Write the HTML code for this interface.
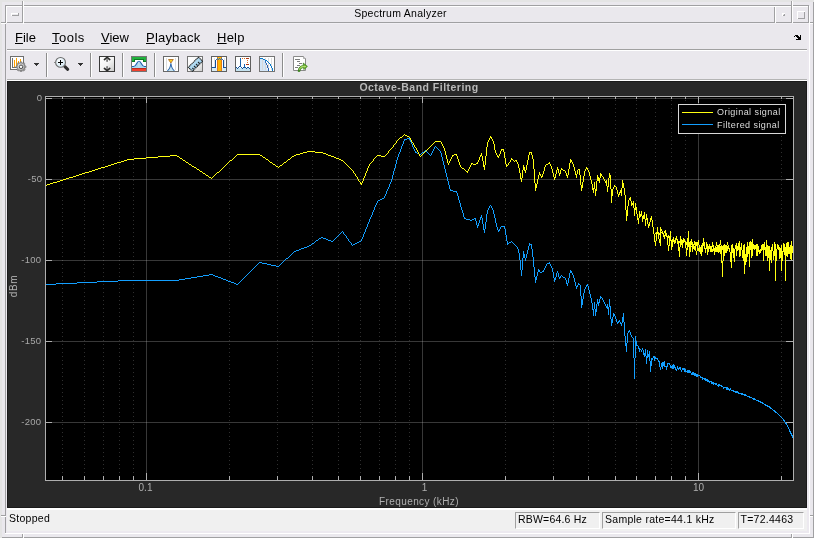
<!DOCTYPE html>
<html><head><meta charset="utf-8"><title>Spectrum Analyzer</title>
<style>
html,body{margin:0;padding:0}
body{width:814px;height:538px;overflow:hidden;background:#eae8ed;position:relative;font-family:"Liberation Sans",sans-serif;color:#000}
.l{position:absolute}
.title{will-change:transform;position:absolute;left:24px;top:6px;width:750px;height:15px;line-height:15px;text-align:center;font-size:10.5px;letter-spacing:0.27px;padding-left:3px;box-sizing:border-box}
.mi{will-change:transform;position:absolute;top:30px;height:16px;line-height:16px;font-size:13px;white-space:nowrap}
.ic{position:absolute;display:block}
.fig{position:absolute;left:7px;top:81px;width:800px;height:427px;background:#282828;overflow:hidden;box-shadow:inset 0 0 0 1px #1b1b1b}
.yl,.xl,.ttl,.xlab,.ylab,.lg{will-change:transform}
.plot{position:absolute;left:0;top:0}
.yl{position:absolute;left:0;width:34.4px;text-align:right;font-size:9.5px;line-height:12px;height:12px;color:#a8a8a8;letter-spacing:0.3px}
.xl{position:absolute;top:401px;width:41px;text-align:center;font-size:10px;line-height:12px;color:#afafaf}
.ttl{position:absolute;left:0;top:0;width:824px;text-align:center;font-size:10.5px;font-weight:bold;line-height:12px;color:#b9b9b9;letter-spacing:0.48px}
.xlab{position:absolute;left:312px;top:415px;width:200px;text-align:center;font-size:10px;line-height:12px;color:#afafaf;letter-spacing:0.4px}
.ylab{position:absolute;left:-13px;top:199px;width:40px;height:12px;text-align:center;font-size:10px;line-height:12px;color:#afafaf;transform:rotate(-90deg);transform-origin:center center;letter-spacing:0.6px}
.lg{position:absolute;left:710px;font-size:9px;line-height:12px;color:#dcdcdc;white-space:nowrap;letter-spacing:0.44px;margin-top:0.3px}
.sb{position:absolute;left:7px;top:508px;width:800px;height:23px;background:#f0f0f0;box-sizing:border-box}
.sb .hl{position:absolute;left:0;top:0;width:800px;height:2px;background:#fff}
.st{position:absolute;top:3px;height:14px;line-height:14px;font-size:10.5px;letter-spacing:0.27px;white-space:nowrap;will-change:transform}
.bx{position:absolute;top:4px;height:17px;will-change:transform;box-sizing:border-box;border:1px solid;border-color:#a0a0a0 #fff #fff #a0a0a0;font-size:10.5px;line-height:12px;padding-left:3px;white-space:nowrap;letter-spacing:0.27px}
</style></head><body>
<div class="l" style="left:0px;top:0px;width:814px;height:2px;background:#e4e4e4"></div>
<div class="l" style="left:0px;top:0px;width:2px;height:538px;background:#e4e4e4"></div>
<div class="l" style="left:813px;top:2px;width:1px;height:536px;background:#a0a0a2"></div>
<div class="l" style="left:2px;top:537px;width:812px;height:1px;background:#a0a0a2"></div>
<div class="l" style="left:5px;top:5px;width:804px;height:1px;background:#a0a0a2"></div>
<div class="l" style="left:5px;top:5px;width:1px;height:528px;background:#a0a0a2"></div>
<div class="l" style="left:809px;top:6px;width:1px;height:528px;background:#ffffff"></div>
<div class="l" style="left:5px;top:533px;width:805px;height:1px;background:#ffffff"></div>
<div class="l" style="left:6px;top:531px;width:803px;height:2px;background:#ece9ef"></div>
<div class="l" style="left:6px;top:6px;width:802px;height:1px;background:#ffffff"></div>
<div class="l" style="left:6px;top:6px;width:1px;height:17px;background:#ffffff"></div>
<div class="l" style="left:6px;top:24px;width:1px;height:507px;background:#ece9ef"></div>
<div class="l" style="left:7px;top:23px;width:802px;height:1px;background:#f1eff4"></div>
<div class="l" style="left:807px;top:24px;width:2px;height:507px;background:#ece9ef"></div>
<div class="l" style="left:7px;top:22px;width:802px;height:1px;background:#a0a0a2"></div>
<div class="l" style="left:808px;top:5px;width:1px;height:18px;background:#a0a0a2"></div>
<div class="l" style="left:22px;top:1px;width:1px;height:22px;background:#a0a0a2"></div>
<div class="l" style="left:23px;top:1px;width:1px;height:23px;background:#ffffff"></div>
<div class="l" style="left:1px;top:22px;width:5px;height:1px;background:#a0a0a2"></div>
<div class="l" style="left:1px;top:23px;width:5px;height:1px;background:#ffffff"></div>
<div class="l" style="left:791px;top:1px;width:1px;height:22px;background:#a0a0a2"></div>
<div class="l" style="left:792px;top:1px;width:1px;height:22px;background:#ffffff"></div>
<div class="l" style="left:810px;top:22px;width:3px;height:1px;background:#a0a0a2"></div>
<div class="l" style="left:810px;top:23px;width:3px;height:1px;background:#ffffff"></div>
<div class="l" style="left:1px;top:515px;width:5px;height:1px;background:#a0a0a2"></div>
<div class="l" style="left:1px;top:516px;width:5px;height:1px;background:#ffffff"></div>
<div class="l" style="left:810px;top:515px;width:3px;height:1px;background:#a0a0a2"></div>
<div class="l" style="left:810px;top:516px;width:3px;height:1px;background:#ffffff"></div>
<div class="l" style="left:22px;top:534px;width:1px;height:4px;background:#a0a0a2"></div>
<div class="l" style="left:23px;top:534px;width:1px;height:4px;background:#ffffff"></div>
<div class="l" style="left:791px;top:534px;width:1px;height:4px;background:#a0a0a2"></div>
<div class="l" style="left:792px;top:534px;width:1px;height:4px;background:#ffffff"></div>
<div class="l" style="left:774px;top:7px;width:1px;height:15px;background:#a0a0a2"></div>
<div class="l" style="left:775px;top:7px;width:1px;height:16px;background:#ffffff"></div>
<div class="l" style="left:11px;top:13px;width:8px;height:1px;background:#ffffff"></div>
<div class="l" style="left:11px;top:13px;width:1px;height:3px;background:#ffffff"></div>
<div class="l" style="left:12px;top:15px;width:7px;height:1px;background:#a0a0a2"></div>
<div class="l" style="left:18px;top:13px;width:1px;height:3px;background:#a0a0a2"></div>
<div class="l" style="left:782px;top:13px;width:3px;height:1px;background:#ffffff"></div>
<div class="l" style="left:782px;top:13px;width:1px;height:3px;background:#ffffff"></div>
<div class="l" style="left:783px;top:15px;width:2px;height:1px;background:#a0a0a2"></div>
<div class="l" style="left:784px;top:14px;width:1px;height:2px;background:#a0a0a2"></div>
<div class="l" style="left:797px;top:11px;width:8px;height:1px;background:#ffffff"></div>
<div class="l" style="left:797px;top:11px;width:1px;height:8px;background:#ffffff"></div>
<div class="l" style="left:798px;top:18px;width:7px;height:1px;background:#a0a0a2"></div>
<div class="l" style="left:804px;top:12px;width:1px;height:7px;background:#a0a0a2"></div>
<div class="l" style="left:7px;top:49px;width:800px;height:1px;background:#a0a0a0"></div>
<div class="l" style="left:7px;top:50px;width:800px;height:1px;background:#ffffff"></div>
<div class="l" style="left:7px;top:79px;width:800px;height:1px;background:#b4b4b4"></div>
<div class="l" style="left:7px;top:80px;width:800px;height:1px;background:#ffffff"></div>
<div class="l" style="left:46px;top:53px;width:1px;height:24px;background:#8c8c8c"></div>
<div class="l" style="left:47px;top:53px;width:1px;height:24px;background:#ffffff"></div>
<div class="l" style="left:90px;top:53px;width:1px;height:24px;background:#8c8c8c"></div>
<div class="l" style="left:91px;top:53px;width:1px;height:24px;background:#ffffff"></div>
<div class="l" style="left:122px;top:53px;width:1px;height:24px;background:#8c8c8c"></div>
<div class="l" style="left:123px;top:53px;width:1px;height:24px;background:#ffffff"></div>
<div class="l" style="left:154px;top:53px;width:1px;height:24px;background:#8c8c8c"></div>
<div class="l" style="left:155px;top:53px;width:1px;height:24px;background:#ffffff"></div>
<div class="l" style="left:282px;top:53px;width:1px;height:24px;background:#8c8c8c"></div>
<div class="l" style="left:283px;top:53px;width:1px;height:24px;background:#ffffff"></div>
<div class="title">Spectrum Analyzer</div>
<div class="mi" style="left:15px;letter-spacing:0.00px"><u>F</u>ile</div>
<div class="mi" style="left:52px;letter-spacing:0.50px"><u>T</u>ools</div>
<div class="mi" style="left:101px;letter-spacing:0.00px"><u>V</u>iew</div>
<div class="mi" style="left:146px;letter-spacing:0.20px"><u>P</u>layback</div>
<div class="mi" style="left:217px;letter-spacing:0.25px"><u>H</u>elp</div>

<svg class="ic" style="left:794px;top:35px" width="7" height="5" viewBox="0 0 7 5" shape-rendering="crispEdges"><path fill="#000" d="M1 0h3v1h-3zM6 0h1v1h-1zM0 1h1v1h-1zM2 1h3v1h-3zM6 1h1v1h-1zM3 2h4v1h-4zM4 3h3v1h-3zM2 4h5v1h-5z"/></svg>
<svg class="ic" style="left:10px;top:56px" width="18" height="16" viewBox="0 0 18 16"><defs><linearGradient id="gg" x1="0" y1="0" x2="1" y2="1"><stop offset="0" stop-color="#efefef"/><stop offset="1" stop-color="#9c9c9c"/></linearGradient></defs>
<g shape-rendering="crispEdges"><rect x="0.5" y="0.5" width="13" height="13" fill="#fff" stroke="#6e6e6e"/>
<rect x="2" y="2" width="1" height="10" fill="#707070"/><rect x="2" y="11" width="5" height="1" fill="#707070"/>
<rect x="4" y="4" width="1" height="7" fill="#ffa200"/><rect x="6" y="2" width="1" height="9" fill="#ffa200"/><rect x="8" y="5" width="1" height="4" fill="#ffa200"/><rect x="10" y="3" width="1" height="4" fill="#ffa200"/></g>
<g transform="translate(11,10.8)">
<g fill="#b4b4b4" stroke="#606060" stroke-width="0.55"><rect x="-1.05" y="-5" width="2.1" height="2" rx="0.5" transform="rotate(0)"/><rect x="-1.05" y="-5" width="2.1" height="2" rx="0.5" transform="rotate(45)"/><rect x="-1.05" y="-5" width="2.1" height="2" rx="0.5" transform="rotate(90)"/><rect x="-1.05" y="-5" width="2.1" height="2" rx="0.5" transform="rotate(135)"/><rect x="-1.05" y="-5" width="2.1" height="2" rx="0.5" transform="rotate(180)"/><rect x="-1.05" y="-5" width="2.1" height="2" rx="0.5" transform="rotate(225)"/><rect x="-1.05" y="-5" width="2.1" height="2" rx="0.5" transform="rotate(270)"/><rect x="-1.05" y="-5" width="2.1" height="2" rx="0.5" transform="rotate(315)"/></g>
<circle r="3.9" fill="url(#gg)" stroke="#6a6a6a" stroke-width="0.6"/>
<circle r="1.75" fill="#fafafa" stroke="#4a4a4a" stroke-width="0.95"/></g></svg>
<svg class="ic" style="left:54px;top:56px" width="18" height="16" viewBox="0 0 18 16"><defs><radialGradient id="zg" cx="0.4" cy="0.35" r="0.7"><stop offset="0" stop-color="#ffffff"/><stop offset="1" stop-color="#cfe6f2"/></radialGradient></defs>
<path d="M10.9 10.7 L13.7 13.3" stroke="#2e2e2e" stroke-width="3.1" stroke-linecap="round"/>
<circle cx="6.55" cy="6.4" r="4.9" fill="url(#zg)" stroke="#6c6c6c" stroke-width="1.1"/>
<g shape-rendering="crispEdges" fill="#000"><rect x="4" y="6" width="5" height="1"/><rect x="6" y="4" width="1" height="5"/><rect x="0" y="6" width="1.4" height="1" fill="#8a8a8a"/></g></svg>
<svg class="ic" style="left:99px;top:56px" width="16" height="16" viewBox="0 0 16 16"><defs><linearGradient id="ag" x1="0" y1="0" x2="1" y2="1"><stop offset="0" stop-color="#ffffff"/><stop offset="0.5" stop-color="#f4f4f4"/><stop offset="1" stop-color="#c8c8c8"/></linearGradient></defs>
<rect x="0.5" y="0.5" width="15" height="15" fill="url(#ag)" stroke="#3a3a3a" shape-rendering="crispEdges"/>
<rect x="7.2" y="3.2" width="1.8" height="2.6" fill="#7a7a7a"/><rect x="7.2" y="10.2" width="1.8" height="2.6" fill="#7a7a7a"/>
<path d="M5.4 3.6 L8.1 1.3 L10.8 3.6" fill="none" stroke="#2c2c2c" stroke-width="1.6" stroke-linecap="round" stroke-linejoin="miter"/>
<path d="M5.4 12.4 L8.1 14.7 L10.8 12.4" fill="none" stroke="#2c2c2c" stroke-width="1.6" stroke-linecap="round" stroke-linejoin="miter"/></svg>
<svg class="ic" style="left:131px;top:56px" width="16" height="16" viewBox="0 0 16 16"><g shape-rendering="crispEdges"><rect x="0.5" y="0.5" width="15" height="15" fill="#fff" stroke="#747474"/>
<rect x="1" y="1" width="14" height="2" fill="#22b13e"/><rect x="1" y="3" width="3" height="2" fill="#22b13e"/><rect x="12" y="3" width="3" height="2" fill="#22b13e"/>
<rect x="3" y="3" width="10" height="1" fill="#0d7a22"/><rect x="1" y="5" width="3" height="1" fill="#0d7a22"/><rect x="12" y="5" width="3" height="1" fill="#0d7a22"/><rect x="3" y="4" width="1" height="1" fill="#0d7a22"/><rect x="12" y="4" width="1" height="1" fill="#0d7a22"/>
<rect x="1" y="11" width="14" height="1" fill="#a8dcf2"/><rect x="1" y="12" width="14" height="1" fill="#c0281a"/><rect x="1" y="13" width="14" height="2" fill="#f0402e"/></g>
<path d="M1 10.5 L2.5 10.5 C5.6 10.5 5.4 5.2 8 5.2 C10.6 5.2 10.4 10.5 13.5 10.5 L15 10.5 L15 11 L1 11 Z" fill="#a9d4ec"/>
<path d="M1 10.5 L2.5 10.5 C5.6 10.5 5.4 5.2 8 5.2 C10.6 5.2 10.4 10.5 13.5 10.5 L15 10.5" fill="none" stroke="#1f5fae" stroke-width="1.1"/>
<rect x="7.6" y="5.6" width="0.7" height="5.4" fill="#d4eaf6"/></svg>
<svg class="ic" style="left:163px;top:56px" width="16" height="16" viewBox="0 0 16 16"><g shape-rendering="crispEdges"><rect x="0.5" y="0.5" width="15" height="15" fill="#fff" stroke="#686868"/>
<rect x="3" y="2" width="1" height="12" fill="#dcdcdc"/><rect x="12" y="2" width="1" height="12" fill="#dcdcdc"/></g>
<path d="M4.4 15 C6.8 13 7.4 11.5 7.9 7.5 C8.4 11.5 9 13 11.4 15 Z" fill="#c4e4f2"/>
<path d="M4.4 14.8 C6.8 13 7.4 11.5 7.9 7.2 C8.4 11.5 9 13 11.4 14.8" fill="none" stroke="#2a66ac" stroke-width="1.05"/>
<path d="M5.5 3.5 L10.3 3.5 L7.9 7 Z" fill="#ffd21e" stroke="#b0702a" stroke-width="0.9" stroke-linejoin="round"/></svg>
<svg class="ic" style="left:187px;top:56px" width="16" height="16" viewBox="0 0 16 16"><defs><linearGradient id="rg" x1="0" y1="0" x2="1" y2="1"><stop offset="0" stop-color="#ffffff"/><stop offset="0.55" stop-color="#f6f6f6"/><stop offset="1" stop-color="#cdcdcd"/></linearGradient>
<linearGradient id="rb" x1="0" y1="0" x2="1" y2="1"><stop offset="0" stop-color="#d4eefa"/><stop offset="1" stop-color="#86c4ea"/></linearGradient></defs>
<rect x="0.5" y="0.5" width="15" height="15" fill="url(#rg)" stroke="#747474" shape-rendering="crispEdges"/>
<path d="M11.4 1.2 L15.6 5.2 L5.5 15.3 L1.3 11.3 Z" fill="url(#rb)" stroke="#222" stroke-width="1.1" stroke-dasharray="1.3 0.5"/>
<g stroke="#222" stroke-width="1.1"><path d="M11.0 6.0 L12.7 7.7"/><path d="M9.0 8.0 L10.7 9.7"/><path d="M7.0 10.0 L8.7 11.7"/><path d="M5.4 12.0 L6.7 13.3"/></g></svg>
<svg class="ic" style="left:211px;top:56px" width="16" height="16" viewBox="0 0 16 16"><g shape-rendering="crispEdges"><rect x="0.5" y="0.5" width="15" height="15" fill="#fff" stroke="#606060"/>
<rect x="3" y="2" width="1" height="12" fill="#e2e2e2"/><rect x="13" y="2" width="1" height="12" fill="#e2e2e2"/>
<rect x="1" y="12" width="14" height="3" fill="#d9ecf4"/>
<rect x="6" y="1" width="5" height="14" fill="#ffb400"/><rect x="6" y="1" width="1" height="14" fill="#e07a18"/><rect x="10" y="1" width="1" height="14" fill="#e07a18"/>
<rect x="1" y="11" width="3" height="1" fill="#14509c"/><rect x="4" y="4" width="1" height="8" fill="#14509c"/><rect x="5" y="3" width="1" height="1" fill="#1f6fc0"/>
<rect x="12" y="11" width="3" height="1" fill="#14509c"/><rect x="12" y="4" width="1" height="8" fill="#14509c"/><rect x="11" y="3" width="1" height="1" fill="#1f6fc0"/>
<rect x="6" y="2" width="1" height="1" fill="#1f6fc0"/><rect x="7" y="3" width="1" height="1" fill="#1f6fc0"/><rect x="8" y="2" width="1" height="1" fill="#1f6fc0"/><rect x="9" y="3" width="1" height="1" fill="#1f6fc0"/><rect x="10" y="2" width="1" height="1" fill="#1f6fc0"/>
</g></svg>
<svg class="ic" style="left:235px;top:56px" width="16" height="16" viewBox="0 0 16 16"><g shape-rendering="crispEdges"><rect x="0.5" y="0.5" width="15" height="15" fill="#fff" stroke="#606060"/>
<rect x="1" y="12" width="14" height="3" fill="#c4e2ef"/>
<rect x="5" y="2" width="1" height="9" fill="#1a62ae"/><rect x="9" y="8" width="1" height="4" fill="#1a62ae"/>
<rect x="1" y="11" width="1" height="1" fill="#15509a"/><rect x="2" y="12" width="1" height="1" fill="#15509a"/><rect x="3" y="11" width="1" height="1" fill="#15509a"/><rect x="4" y="10" width="1" height="1" fill="#15509a"/>
<rect x="6" y="11" width="1" height="1" fill="#15509a"/><rect x="7" y="12" width="1" height="1" fill="#15509a"/><rect x="8" y="11" width="1" height="1" fill="#15509a"/><rect x="10" y="11" width="1" height="1" fill="#15509a"/><rect x="11" y="12" width="1" height="1" fill="#15509a"/><rect x="12" y="11" width="2" height="1" fill="#15509a"/><rect x="14" y="12" width="1" height="1" fill="#15509a"/>
<rect x="7" y="2" width="1" height="1" fill="#e0701e"/><rect x="9" y="2" width="1" height="1" fill="#e0701e"/><rect x="11" y="2" width="3" height="1" fill="#b0340f"/>
<rect x="12" y="4" width="1" height="1" fill="#e0701e"/><rect x="12" y="6" width="1" height="1" fill="#e0701e"/><rect x="11" y="8" width="3" height="1" fill="#b0340f"/>
</g></svg>
<svg class="ic" style="left:259px;top:56px" width="16" height="16" viewBox="0 0 16 16"><g shape-rendering="crispEdges"><rect x="0.5" y="0.5" width="15" height="15" fill="#fff" stroke="#747474"/></g>
<path d="M1 2.5 L3.5 2.5 L6 4.5 L9 15 L1 15 Z" fill="#d4e6f8"/>
<g shape-rendering="crispEdges"><rect x="3" y="2" width="1" height="12" fill="#d8d8d8"/><rect x="6" y="2" width="1" height="12" fill="#d8d8d8"/><rect x="9" y="2" width="1" height="12" fill="#dcdcdc"/><rect x="12" y="2" width="1" height="12" fill="#dcdcdc"/>
<rect x="1" y="2" width="3" height="1" fill="#0a7acc"/><rect x="4" y="3" width="2" height="1" fill="#0a7acc"/><rect x="6" y="4" width="2" height="1" fill="#0a7acc"/><rect x="8" y="5" width="1" height="1" fill="#0a7acc"/><rect x="9" y="6" width="1" height="1" fill="#0a7acc"/><rect x="10" y="7" width="1" height="1" fill="#0a7acc"/><rect x="11" y="8" width="1" height="2" fill="#0a7acc"/><rect x="12" y="10" width="1" height="2" fill="#0a7acc"/><rect x="13" y="12" width="1" height="3" fill="#0a7acc"/>
<rect x="6" y="5" width="1" height="2" fill="#2f6ab8"/><rect x="7" y="7" width="1" height="2" fill="#2f6ab8"/><rect x="8" y="9" width="1" height="3" fill="#3a62a8"/><rect x="9" y="12" width="1" height="3" fill="#2060b8"/>
</g></svg>
<svg class="ic" style="left:292px;top:56px" width="18" height="16" viewBox="0 0 18 16"><defs><linearGradient id="gr" x1="0" y1="1" x2="1" y2="0"><stop offset="0" stop-color="#2f7d12"/><stop offset="0.5" stop-color="#8cc83c"/><stop offset="1" stop-color="#4c9a1c"/></linearGradient></defs>
<path d="M1.5 0.5 L11.5 0.5 L13.5 2.5 L13.5 14.5 L1.5 14.5 Z" fill="#fff" stroke="#8a8a8a"/>
<path d="M11.5 0.5 L11.5 2.5 L13.5 2.5" fill="#f4f4f4" stroke="#9a9a9a" stroke-width="0.8"/>
<g shape-rendering="crispEdges" fill="#7c7c7c"><rect x="3" y="3" width="5" height="1"/><rect x="5" y="5" width="3" height="1"/><rect x="7" y="7" width="3" height="1"/><rect x="5" y="9" width="3" height="1"/><rect x="3" y="11" width="3" height="1"/></g>
<path d="M6.2 15.6 C6.2 11.6 8.2 9.6 11.4 9.5 L11.2 7 L15.4 10.4 L11.8 13.6 L11.6 11.6 C9.6 11.8 8.2 13 7.8 15.6 Z" fill="url(#gr)" stroke="#2e7a14" stroke-width="0.7" stroke-linejoin="round"/>
<path d="M7.4 13.4 C8 11.4 9.6 10.5 11.8 10.4 L13.6 10.5" fill="none" stroke="#c6ea8a" stroke-width="0.8" stroke-linecap="round"/></svg>
<svg class="ic" style="left:34px;top:63px" width="5" height="3" viewBox="0 0 5 3" shape-rendering="crispEdges"><rect x="0" y="0" width="5" height="1" fill="#333"/><rect x="1" y="1" width="3" height="1" fill="#333"/><rect x="2" y="2" width="1" height="1" fill="#333"/></svg>
<svg class="ic" style="left:78px;top:63px" width="5" height="3" viewBox="0 0 5 3" shape-rendering="crispEdges"><rect x="0" y="0" width="5" height="1" fill="#333"/><rect x="1" y="1" width="3" height="1" fill="#333"/><rect x="2" y="2" width="1" height="1" fill="#333"/></svg>

<div class="fig">
<svg class="plot" width="800" height="427" viewBox="0 0 800 427"><rect x="38" y="15" width="749" height="385" fill="#000"/>
<g shape-rendering="crispEdges"><line x1="55.5" y1="19" x2="55.5" y2="398" stroke="rgba(175,175,175,0.27)" stroke-dasharray="1 3"/><line x1="77.5" y1="19" x2="77.5" y2="398" stroke="rgba(175,175,175,0.27)" stroke-dasharray="1 3"/><line x1="96.5" y1="19" x2="96.5" y2="398" stroke="rgba(175,175,175,0.27)" stroke-dasharray="1 3"/><line x1="112.5" y1="19" x2="112.5" y2="398" stroke="rgba(175,175,175,0.27)" stroke-dasharray="1 3"/><line x1="126.5" y1="19" x2="126.5" y2="398" stroke="rgba(175,175,175,0.27)" stroke-dasharray="1 3"/><line x1="222.5" y1="19" x2="222.5" y2="398" stroke="rgba(175,175,175,0.27)" stroke-dasharray="1 3"/><line x1="270.5" y1="19" x2="270.5" y2="398" stroke="rgba(175,175,175,0.27)" stroke-dasharray="1 3"/><line x1="305.5" y1="19" x2="305.5" y2="398" stroke="rgba(175,175,175,0.27)" stroke-dasharray="1 3"/><line x1="331.5" y1="19" x2="331.5" y2="398" stroke="rgba(175,175,175,0.27)" stroke-dasharray="1 3"/><line x1="353.5" y1="19" x2="353.5" y2="398" stroke="rgba(175,175,175,0.27)" stroke-dasharray="1 3"/><line x1="372.5" y1="19" x2="372.5" y2="398" stroke="rgba(175,175,175,0.27)" stroke-dasharray="1 3"/><line x1="388.5" y1="19" x2="388.5" y2="398" stroke="rgba(175,175,175,0.27)" stroke-dasharray="1 3"/><line x1="402.5" y1="19" x2="402.5" y2="398" stroke="rgba(175,175,175,0.27)" stroke-dasharray="1 3"/><line x1="498.5" y1="19" x2="498.5" y2="398" stroke="rgba(175,175,175,0.27)" stroke-dasharray="1 3"/><line x1="546.5" y1="19" x2="546.5" y2="398" stroke="rgba(175,175,175,0.27)" stroke-dasharray="1 3"/><line x1="581.5" y1="19" x2="581.5" y2="398" stroke="rgba(175,175,175,0.27)" stroke-dasharray="1 3"/><line x1="608.5" y1="19" x2="608.5" y2="398" stroke="rgba(175,175,175,0.27)" stroke-dasharray="1 3"/><line x1="629.5" y1="19" x2="629.5" y2="398" stroke="rgba(175,175,175,0.27)" stroke-dasharray="1 3"/><line x1="648.5" y1="19" x2="648.5" y2="398" stroke="rgba(175,175,175,0.27)" stroke-dasharray="1 3"/><line x1="664.5" y1="19" x2="664.5" y2="398" stroke="rgba(175,175,175,0.27)" stroke-dasharray="1 3"/><line x1="678.5" y1="19" x2="678.5" y2="398" stroke="rgba(175,175,175,0.27)" stroke-dasharray="1 3"/><line x1="774.5" y1="19" x2="774.5" y2="398" stroke="rgba(175,175,175,0.27)" stroke-dasharray="1 3"/><rect x="139" y="16" width="1" height="383" fill="rgba(175,175,175,0.32)"/><rect x="415" y="16" width="1" height="383" fill="rgba(175,175,175,0.32)"/><rect x="691" y="16" width="1" height="383" fill="rgba(175,175,175,0.32)"/><rect x="39" y="17" width="747" height="1" fill="rgba(175,175,175,0.32)"/><rect x="39" y="98" width="747" height="1" fill="rgba(175,175,175,0.32)"/><rect x="39" y="179" width="747" height="1" fill="rgba(175,175,175,0.32)"/><rect x="39" y="260" width="747" height="1" fill="rgba(175,175,175,0.32)"/><rect x="39" y="341" width="747" height="1" fill="rgba(175,175,175,0.32)"/></g>
<g shape-rendering="crispEdges">
<path fill="#139fff" d="M400 57h3v1h-3zM397 58h3v1h-3zM402 58h1v1h-1zM397 59h1v1h-1zM403 59h1v2h-1zM396 60h1v3h-1zM404 61h1v2h-1zM395 63h1v2h-1zM405 63h1v3h-1zM394 65h1v3h-1zM428 65h1v1h-1zM406 66h1v2h-1zM427 66h1v2h-1zM429 66h1v1h-1zM430 67h1v1h-1zM393 68h1v3h-1zM407 68h1v2h-1zM426 68h1v2h-1zM431 68h1v1h-1zM418 69h1v1h-1zM432 69h1v1h-1zM408 70h1v2h-1zM417 70h1v1h-1zM419 70h1v1h-1zM425 70h1v2h-1zM433 70h1v2h-1zM392 71h1v2h-1zM409 71h1v1h-1zM415 71h2v1h-2zM420 71h1v1h-1zM410 72h2v1h-2zM414 72h1v1h-1zM421 72h1v1h-1zM424 72h1v2h-1zM434 72h1v4h-1zM391 73h1v3h-1zM412 73h2v1h-2zM422 73h1v1h-1zM423 74h1v1h-1zM390 76h1v3h-1zM435 76h1v4h-1zM389 79h1v4h-1zM436 80h1v4h-1zM388 83h1v4h-1zM437 84h1v4h-1zM387 87h1v3h-1zM438 88h1v4h-1zM386 90h1v4h-1zM439 92h1v4h-1zM385 94h1v4h-1zM440 96h1v4h-1zM384 98h1v3h-1zM441 100h1v4h-1zM383 101h1v2h-1zM382 103h1v3h-1zM442 104h1v4h-1zM381 106h1v2h-1zM380 108h1v2h-1zM443 108h1v2h-1zM444 109h2v1h-2zM379 110h1v3h-1zM446 110h4v1h-4zM449 111h1v1h-1zM450 112h1v3h-1zM378 113h1v2h-1zM377 115h1v2h-1zM451 115h1v4h-1zM375 117h2v1h-2zM373 118h2v1h-2zM371 119h2v1h-2zM452 119h1v3h-1zM370 120h1v2h-1zM369 122h1v2h-1zM453 122h1v4h-1zM368 124h1v2h-1zM483 124h1v1h-1zM482 125h1v2h-1zM484 125h1v2h-1zM367 126h1v3h-1zM454 126h1v3h-1zM481 127h1v2h-1zM485 127h1v2h-1zM366 129h1v2h-1zM455 129h1v3h-1zM480 129h1v4h-1zM486 129h1v4h-1zM365 131h1v3h-1zM456 132h1v4h-1zM479 133h1v8h-1zM487 133h1v4h-1zM364 134h1v2h-1zM474 134h1v3h-1zM363 136h1v2h-1zM457 136h1v2h-1zM473 136h1v3h-1zM458 137h1v1h-1zM467 137h2v1h-2zM475 137h1v6h-1zM488 137h1v5h-1zM362 138h1v3h-1zM459 138h4v1h-4zM465 138h2v1h-2zM468 138h1v2h-1zM463 139h2v1h-2zM472 139h1v3h-1zM469 140h1v4h-1zM361 141h1v2h-1zM478 141h1v7h-1zM471 142h1v3h-1zM489 142h1v4h-1zM360 143h1v3h-1zM476 143h1v6h-1zM470 144h1v3h-1zM494 145h4v1h-4zM359 146h1v2h-1zM490 146h1v3h-1zM493 146h1v2h-1zM497 146h1v2h-1zM358 148h1v3h-1zM477 148h1v4h-1zM492 148h1v2h-1zM498 148h1v6h-1zM491 149h1v2h-1zM335 150h1v1h-1zM334 151h1v1h-1zM336 151h1v2h-1zM357 151h1v2h-1zM333 152h1v1h-1zM332 153h1v1h-1zM337 153h1v1h-1zM356 153h1v3h-1zM331 154h1v1h-1zM338 154h1v1h-1zM499 154h1v6h-1zM330 155h1v1h-1zM339 155h1v2h-1zM314 156h2v1h-2zM329 156h1v1h-1zM355 156h1v2h-1zM312 157h2v1h-2zM316 157h3v1h-3zM328 157h1v1h-1zM340 157h1v1h-1zM311 158h1v1h-1zM319 158h2v1h-2zM327 158h1v1h-1zM341 158h1v2h-1zM354 158h1v2h-1zM309 159h2v1h-2zM321 159h3v1h-3zM326 159h1v1h-1zM308 160h1v1h-1zM324 160h2v1h-2zM342 160h1v1h-1zM352 160h2v1h-2zM500 160h1v4h-1zM504 160h1v1h-1zM307 161h1v1h-1zM343 161h1v1h-1zM350 161h2v1h-2zM502 161h2v1h-2zM505 161h1v1h-1zM305 162h2v1h-2zM344 162h1v2h-1zM348 162h2v1h-2zM501 162h1v1h-1zM506 162h1v1h-1zM522 162h1v3h-1zM304 163h1v1h-1zM346 163h2v1h-2zM507 163h1v1h-1zM523 163h2v1h-2zM302 164h2v1h-2zM345 164h1v1h-1zM508 164h1v1h-1zM524 164h1v4h-1zM300 165h2v1h-2zM509 165h1v1h-1zM521 165h1v4h-1zM297 166h3v1h-3zM510 166h1v2h-1zM294 167h3v1h-3zM292 168h2v1h-2zM511 168h1v4h-1zM525 168h1v8h-1zM289 169h3v1h-3zM520 169h1v4h-1zM287 170h2v1h-2zM516 170h1v7h-1zM286 171h1v1h-1zM285 172h1v1h-1zM512 172h1v7h-1zM284 173h1v1h-1zM517 173h1v4h-1zM519 173h1v4h-1zM283 174h1v1h-1zM282 175h1v1h-1zM281 176h1v1h-1zM526 176h1v10h-1zM279 177h2v1h-2zM515 177h1v12h-1zM518 177h1v3h-1zM278 178h1v1h-1zM277 179h1v1h-1zM513 179h1v10h-1zM276 180h1v1h-1zM252 181h3v1h-3zM275 181h1v1h-1zM542 181h1v2h-1zM251 182h1v1h-1zM255 182h5v1h-5zM274 182h1v1h-1zM540 182h2v1h-2zM250 183h1v1h-1zM260 183h4v1h-4zM273 183h1v1h-1zM539 183h1v2h-1zM543 183h1v2h-1zM249 184h1v1h-1zM264 184h5v1h-5zM272 184h1v1h-1zM248 185h1v1h-1zM269 185h3v1h-3zM538 185h1v2h-1zM544 185h1v2h-1zM247 186h1v1h-1zM527 186h1v10h-1zM246 187h1v1h-1zM537 187h1v2h-1zM545 187h1v4h-1zM245 188h1v1h-1zM531 188h1v3h-1zM244 189h1v1h-1zM514 189h1v6h-1zM532 189h1v2h-1zM536 189h1v2h-1zM563 189h1v3h-1zM243 190h1v1h-1zM535 190h1v1h-1zM550 190h1v2h-1zM564 190h1v2h-1zM242 191h1v1h-1zM530 191h1v4h-1zM533 191h2v1h-2zM546 191h1v6h-1zM241 192h1v1h-1zM549 192h1v4h-1zM551 192h1v4h-1zM562 192h1v5h-1zM565 192h1v2h-1zM202 193h4v1h-4zM240 193h1v1h-1zM196 194h6v1h-6zM206 194h2v1h-2zM239 194h1v1h-1zM554 194h1v1h-1zM566 194h1v3h-1zM190 195h6v1h-6zM208 195h3v1h-3zM238 195h1v1h-1zM529 195h1v4h-1zM553 195h1v2h-1zM555 195h1v1h-1zM184 196h6v1h-6zM211 196h3v1h-3zM237 196h1v1h-1zM528 196h1v6h-1zM548 196h1v3h-1zM552 196h1v2h-1zM556 196h2v1h-2zM178 197h6v1h-6zM214 197h2v1h-2zM236 197h1v1h-1zM547 197h1v4h-1zM558 197h1v2h-1zM561 197h1v5h-1zM567 197h1v4h-1zM172 198h6v1h-6zM216 198h3v1h-3zM235 198h1v1h-1zM111 199h61v1h-61zM219 199h2v1h-2zM234 199h1v1h-1zM559 199h1v4h-1zM90 200h21v1h-21zM221 200h3v1h-3zM233 200h1v1h-1zM70 201h20v1h-20zM224 201h3v1h-3zM232 201h1v1h-1zM568 201h1v4h-1zM49 202h21v1h-21zM227 202h2v1h-2zM231 202h1v1h-1zM560 202h1v3h-1zM571 202h1v2h-1zM39 203h10v1h-10zM229 203h2v1h-2zM572 203h1v1h-1zM580 203h1v2h-1zM570 204h1v2h-1zM573 204h1v11h-1zM579 204h1v2h-1zM569 205h1v3h-1zM581 205h1v4h-1zM578 206h1v2h-1zM577 208h1v4h-1zM582 209h1v4h-1zM576 212h1v6h-1zM583 213h1v4h-1zM574 215h1v12h-1zM593 215h1v3h-1zM594 216h1v1h-1zM584 217h1v5h-1zM595 217h1v2h-1zM575 218h1v6h-1zM590 218h1v5h-1zM592 218h1v4h-1zM602 218h1v8h-1zM596 219h1v2h-1zM587 221h1v7h-1zM591 221h1v4h-1zM597 221h1v2h-1zM585 222h1v7h-1zM589 223h1v8h-1zM598 223h1v2h-1zM600 223h1v5h-1zM599 225h1v2h-1zM603 225h1v13h-1zM601 226h1v8h-1zM586 228h1v7h-1zM588 228h1v7h-1zM606 232h1v4h-1zM616 232h1v9h-1zM607 233h1v2h-1zM608 235h1v3h-1zM605 236h1v6h-1zM615 236h1v6h-1zM604 238h1v7h-1zM609 238h1v3h-1zM612 239h1v2h-1zM611 240h1v2h-1zM610 241h1v2h-1zM613 241h1v2h-1zM617 241h1v14h-1zM614 242h1v3h-1zM622 249h1v2h-1zM621 250h1v2h-1zM623 251h1v3h-1zM620 252h1v10h-1zM624 254h1v2h-1zM618 255h1v10h-1zM628 255h1v22h-1zM625 256h1v1h-1zM626 257h1v20h-1zM629 260h1v5h-1zM619 262h1v9h-1zM630 264h1v1h-1zM631 265h1v3h-1zM632 267h1v4h-1zM635 267h1v2h-1zM633 268h1v1h-1zM638 268h1v7h-1zM634 269h1v2h-1zM636 269h1v5h-1zM640 269h1v8h-1zM642 270h1v10h-1zM637 272h1v4h-1zM641 273h1v3h-1zM639 275h1v8h-1zM646 275h2v1h-2zM646 276h3v1h-3zM627 277h1v21h-1zM644 277h2v1h-2zM647 277h4v1h-4zM644 278h2v1h-2zM647 278h1v2h-1zM650 278h1v1h-1zM644 279h1v6h-1zM651 279h1v2h-1zM643 280h1v11h-1zM652 280h1v6h-1zM657 280h1v6h-1zM655 281h2v1h-2zM654 282h3v1h-3zM660 282h3v1h-3zM654 283h3v1h-3zM660 283h1v3h-1zM662 283h1v1h-1zM666 283h1v5h-1zM654 284h3v1h-3zM663 284h1v3h-1zM665 284h1v4h-1zM667 284h1v3h-1zM654 285h2v1h-2zM658 285h2v1h-2zM664 285h1v2h-1zM670 285h1v3h-1zM653 286h1v3h-1zM655 286h1v2h-1zM659 286h1v3h-1zM668 286h1v3h-1zM672 286h2v1h-2zM671 287h3v1h-3zM675 287h3v1h-3zM669 288h1v2h-1zM671 288h1v1h-1zM673 288h1v1h-1zM675 288h4v1h-4zM674 289h1v2h-1zM677 289h2v1h-2zM680 289h3v1h-3zM677 290h7v1h-7zM680 291h4v1h-4zM685 291h2v1h-2zM684 292h5v1h-5zM684 293h7v1h-7zM687 294h6v1h-6zM689 295h2v1h-2zM693 295h1v2h-1zM694 296h2v1h-2zM695 297h4v1h-4zM695 298h1v1h-1zM697 298h4v1h-4zM698 299h4v1h-4zM700 300h5v1h-5zM702 301h1v1h-1zM704 301h3v1h-3zM704 302h6v1h-6zM706 303h1v1h-1zM708 303h2v1h-2zM711 303h2v1h-2zM710 304h5v1h-5zM711 305h1v1h-1zM714 305h2v1h-2zM716 306h5v1h-5zM716 307h1v1h-1zM719 307h3v1h-3zM723 307h1v2h-1zM719 308h4v1h-4zM722 309h1v1h-1zM724 309h3v1h-3zM726 310h5v1h-5zM728 311h4v1h-4zM731 312h5v1h-5zM734 313h5v1h-5zM737 314h3v1h-3zM740 315h3v1h-3zM742 316h3v1h-3zM745 317h3v1h-3zM746 318h3v1h-3zM749 319h3v1h-3zM751 320h3v1h-3zM753 321h3v1h-3zM755 322h2v1h-2zM757 323h2v1h-2zM758 324h3v1h-3zM760 325h3v1h-3zM762 326h2v1h-2zM763 327h2v1h-2zM765 328h1v1h-1zM766 329h2v1h-2zM767 330h2v1h-2zM768 331h2v1h-2zM770 332h1v1h-1zM771 333h1v1h-1zM772 334h1v1h-1zM773 335h1v1h-1zM774 336h1v1h-1zM775 337h1v1h-1zM776 338h1v2h-1zM777 339h1v2h-1zM778 341h1v2h-1zM779 342h1v2h-1zM780 344h1v2h-1zM781 346h1v2h-1zM782 348h1v3h-1zM783 350h1v3h-1zM784 352h1v3h-1zM785 354h1v3h-1z"/>
<path fill="#ffff11" d="M397 53h1v1h-1zM396 54h1v1h-1zM398 54h2v1h-2zM395 55h1v1h-1zM400 55h2v1h-2zM483 55h1v2h-1zM393 56h2v1h-2zM402 56h1v1h-1zM484 56h1v2h-1zM392 57h1v1h-1zM403 57h1v2h-1zM482 57h1v2h-1zM391 58h1v1h-1zM485 58h1v2h-1zM390 59h1v1h-1zM404 59h1v2h-1zM481 59h1v2h-1zM389 60h1v2h-1zM428 60h6v1h-6zM486 60h1v3h-1zM405 61h1v1h-1zM427 61h1v1h-1zM434 61h1v2h-1zM480 61h1v5h-1zM388 62h1v1h-1zM406 62h1v2h-1zM426 62h1v1h-1zM387 63h1v1h-1zM425 63h1v1h-1zM435 63h1v2h-1zM487 63h1v6h-1zM386 64h1v2h-1zM407 64h1v2h-1zM424 64h1v1h-1zM423 65h1v1h-1zM436 65h1v2h-1zM385 66h1v1h-1zM408 66h1v1h-1zM422 66h1v1h-1zM479 66h1v9h-1zM384 67h1v1h-1zM409 67h1v2h-1zM421 67h1v1h-1zM437 67h1v3h-1zM383 68h1v1h-1zM420 68h1v1h-1zM494 68h3v1h-3zM382 69h1v1h-1zM410 69h1v2h-1zM419 69h1v1h-1zM488 69h1v3h-1zM494 69h1v1h-1zM496 69h1v2h-1zM300 70h8v1h-8zM381 70h1v2h-1zM418 70h1v1h-1zM438 70h1v4h-1zM493 70h1v3h-1zM296 71h4v1h-4zM308 71h8v1h-8zM411 71h1v2h-1zM417 71h1v1h-1zM497 71h1v6h-1zM522 71h3v1h-3zM293 72h3v1h-3zM316 72h3v1h-3zM380 72h1v1h-1zM416 72h1v1h-1zM474 72h1v3h-1zM489 72h1v2h-1zM522 72h1v2h-1zM524 72h1v2h-1zM230 73h23v1h-23zM289 73h4v1h-4zM319 73h2v1h-2zM379 73h1v1h-1zM412 73h1v2h-1zM415 73h1v1h-1zM447 73h3v1h-3zM492 73h1v2h-1zM163 74h7v1h-7zM229 74h1v1h-1zM253 74h2v1h-2zM287 74h2v1h-2zM321 74h3v1h-3zM370 74h4v1h-4zM378 74h1v1h-1zM414 74h1v1h-1zM439 74h1v4h-1zM445 74h2v1h-2zM449 74h1v1h-1zM473 74h1v2h-1zM490 74h1v2h-1zM521 74h1v5h-1zM525 74h1v4h-1zM151 75h12v1h-12zM170 75h2v1h-2zM228 75h1v1h-1zM255 75h1v1h-1zM285 75h2v1h-2zM324 75h3v1h-3zM369 75h1v1h-1zM374 75h4v1h-4zM413 75h1v1h-1zM445 75h1v1h-1zM450 75h1v3h-1zM475 75h1v5h-1zM478 75h1v9h-1zM491 75h1v2h-1zM139 76h12v1h-12zM172 76h1v1h-1zM227 76h1v1h-1zM256 76h2v1h-2zM284 76h1v1h-1zM327 76h2v1h-2zM368 76h1v1h-1zM444 76h1v2h-1zM472 76h1v3h-1zM127 77h12v1h-12zM173 77h2v1h-2zM226 77h1v1h-1zM258 77h1v1h-1zM283 77h1v1h-1zM329 77h3v1h-3zM367 77h1v1h-1zM498 77h1v6h-1zM504 77h1v2h-1zM120 78h7v1h-7zM175 78h1v1h-1zM225 78h1v1h-1zM259 78h2v1h-2zM281 78h2v1h-2zM332 78h2v1h-2zM366 78h1v2h-1zM440 78h1v4h-1zM443 78h1v2h-1zM451 78h1v3h-1zM505 78h1v1h-1zM526 78h1v10h-1zM563 78h1v4h-1zM117 79h3v1h-3zM176 79h2v1h-2zM223 79h2v1h-2zM261 79h1v1h-1zM280 79h1v1h-1zM334 79h2v1h-2zM471 79h1v2h-1zM503 79h1v2h-1zM506 79h1v1h-1zM508 79h2v1h-2zM520 79h1v5h-1zM564 79h1v2h-1zM114 80h3v1h-3zM178 80h1v1h-1zM222 80h1v1h-1zM262 80h1v1h-1zM279 80h1v1h-1zM336 80h1v1h-1zM365 80h1v1h-1zM442 80h1v2h-1zM476 80h1v6h-1zM507 80h1v1h-1zM509 80h1v1h-1zM110 81h4v1h-4zM179 81h2v1h-2zM221 81h1v1h-1zM263 81h2v1h-2zM277 81h2v1h-2zM337 81h1v1h-1zM364 81h1v1h-1zM452 81h1v3h-1zM470 81h1v2h-1zM502 81h1v1h-1zM510 81h1v2h-1zM542 81h1v2h-1zM565 81h1v2h-1zM107 82h3v1h-3zM181 82h1v1h-1zM220 82h1v1h-1zM265 82h1v1h-1zM276 82h1v1h-1zM338 82h1v1h-1zM363 82h1v1h-1zM441 82h1v2h-1zM464 82h2v1h-2zM469 82h1v1h-1zM501 82h1v2h-1zM541 82h1v1h-1zM562 82h1v6h-1zM104 83h3v1h-3zM182 83h2v1h-2zM219 83h1v1h-1zM266 83h2v1h-2zM275 83h1v1h-1zM339 83h1v1h-1zM362 83h1v2h-1zM464 83h1v1h-1zM466 83h3v1h-3zM499 83h1v3h-1zM511 83h1v4h-1zM539 83h2v1h-2zM543 83h1v2h-1zM566 83h1v3h-1zM101 84h3v1h-3zM184 84h1v1h-1zM218 84h1v1h-1zM268 84h1v1h-1zM273 84h2v1h-2zM340 84h1v1h-1zM453 84h1v2h-1zM463 84h1v2h-1zM477 84h1v5h-1zM500 84h1v1h-1zM516 84h1v5h-1zM519 84h1v5h-1zM538 84h1v2h-1zM98 85h3v1h-3zM185 85h2v1h-2zM217 85h1v1h-1zM269 85h2v1h-2zM272 85h1v1h-1zM341 85h1v1h-1zM361 85h1v2h-1zM544 85h1v3h-1zM94 86h4v1h-4zM187 86h2v1h-2zM216 86h1v1h-1zM271 86h1v1h-1zM342 86h1v1h-1zM454 86h1v1h-1zM462 86h1v2h-1zM517 86h1v4h-1zM537 86h1v4h-1zM550 86h1v3h-1zM567 86h1v4h-1zM579 86h1v2h-1zM91 87h3v1h-3zM189 87h1v1h-1zM215 87h1v1h-1zM343 87h1v1h-1zM360 87h1v3h-1zM455 87h2v1h-2zM512 87h1v5h-1zM554 87h1v2h-1zM580 87h1v2h-1zM88 88h3v1h-3zM190 88h2v1h-2zM214 88h1v1h-1zM344 88h1v1h-1zM457 88h1v1h-1zM461 88h1v2h-1zM527 88h1v14h-1zM545 88h1v4h-1zM551 88h1v4h-1zM555 88h1v1h-1zM561 88h1v6h-1zM571 88h2v1h-2zM578 88h1v2h-1zM85 89h3v1h-3zM192 89h1v1h-1zM213 89h1v1h-1zM345 89h1v1h-1zM458 89h1v1h-1zM515 89h1v8h-1zM518 89h1v3h-1zM549 89h1v4h-1zM553 89h1v4h-1zM556 89h2v1h-2zM570 89h1v4h-1zM572 89h1v5h-1zM581 89h1v2h-1zM82 90h3v1h-3zM193 90h2v1h-2zM212 90h1v1h-1zM346 90h1v2h-1zM359 90h1v2h-1zM459 90h2v1h-2zM536 90h1v3h-1zM558 90h1v2h-1zM568 90h1v4h-1zM577 90h1v5h-1zM78 91h4v1h-4zM195 91h1v1h-1zM210 91h2v1h-2zM460 91h1v1h-1zM532 91h1v3h-1zM582 91h1v4h-1zM75 92h3v1h-3zM196 92h2v1h-2zM209 92h1v1h-1zM347 92h1v1h-1zM358 92h1v3h-1zM513 92h1v6h-1zM546 92h1v4h-1zM552 92h1v3h-1zM559 92h1v3h-1zM593 92h1v5h-1zM602 92h1v5h-1zM72 93h3v1h-3zM198 93h1v1h-1zM208 93h1v1h-1zM348 93h1v2h-1zM533 93h1v2h-1zM535 93h1v3h-1zM548 93h1v4h-1zM569 93h1v4h-1zM594 93h1v2h-1zM69 94h3v1h-3zM199 94h2v1h-2zM207 94h1v1h-1zM531 94h1v4h-1zM560 94h1v3h-1zM573 94h1v10h-1zM590 94h1v6h-1zM603 94h1v14h-1zM66 95h3v1h-3zM201 95h1v1h-1zM206 95h1v1h-1zM349 95h1v1h-1zM357 95h1v2h-1zM534 95h1v2h-1zM576 95h1v6h-1zM583 95h1v4h-1zM595 95h1v1h-1zM62 96h4v1h-4zM202 96h2v1h-2zM205 96h1v1h-1zM350 96h1v2h-1zM547 96h1v3h-1zM591 96h1v4h-1zM596 96h1v2h-1zM59 97h3v1h-3zM204 97h1v1h-1zM356 97h1v3h-1zM514 97h1v4h-1zM592 97h1v5h-1zM601 97h1v9h-1zM56 98h3v1h-3zM351 98h1v2h-1zM530 98h1v5h-1zM597 98h1v2h-1zM53 99h3v1h-3zM584 99h1v4h-1zM599 99h1v6h-1zM615 99h1v8h-1zM50 100h3v1h-3zM352 100h1v1h-1zM355 100h1v2h-1zM589 100h1v10h-1zM598 100h1v2h-1zM46 101h4v1h-4zM353 101h1v2h-1zM575 101h1v6h-1zM587 101h1v7h-1zM43 102h3v1h-3zM354 102h1v2h-1zM528 102h1v8h-1zM616 102h1v5h-1zM40 103h3v1h-3zM529 103h1v4h-1zM585 103h1v6h-1zM39 104h1v1h-1zM574 104h1v6h-1zM607 104h1v2h-1zM600 105h1v6h-1zM608 105h1v1h-1zM606 106h1v2h-1zM609 106h1v3h-1zM586 107h1v5h-1zM614 107h1v8h-1zM617 107h1v7h-1zM588 108h1v7h-1zM604 108h2v1h-2zM604 109h2v1h-2zM610 109h1v4h-1zM613 109h1v3h-1zM604 110h2v1h-2zM604 111h2v1h-2zM612 111h1v3h-1zM604 112h2v1h-2zM604 113h2v1h-2zM611 113h1v3h-1zM604 114h2v1h-2zM618 114h1v15h-1zM604 115h1v7h-1zM623 116h1v4h-1zM622 117h1v2h-1zM621 119h1v6h-1zM624 120h1v5h-1zM626 120h1v7h-1zM625 122h1v2h-1zM628 122h1v7h-1zM620 125h1v10h-1zM629 126h1v7h-1zM627 127h1v8h-1zM619 129h1v11h-1zM632 130h1v7h-1zM634 130h1v5h-1zM637 131h1v7h-1zM630 133h1v6h-1zM633 133h1v3h-1zM639 133h1v6h-1zM636 134h1v4h-1zM635 135h1v6h-1zM644 135h1v4h-1zM631 137h1v6h-1zM640 137h1v6h-1zM643 137h1v4h-1zM638 138h1v7h-1zM645 139h1v7h-1zM642 141h1v4h-1zM641 143h1v4h-1zM646 146h1v7h-1zM650 146h1v7h-1zM653 146h1v19h-1zM654 148h1v2h-1zM658 149h1v6h-1zM655 150h1v3h-1zM657 150h1v2h-1zM663 150h1v10h-1zM681 150h1v16h-1zM649 151h1v9h-1zM651 151h1v7h-1zM654 151h1v1h-1zM648 152h1v1h-1zM652 152h1v2h-1zM656 152h1v4h-1zM659 152h1v4h-1zM647 153h1v8h-1zM657 154h1v4h-1zM661 154h1v3h-1zM660 155h1v9h-1zM662 155h1v10h-1zM669 155h1v4h-1zM673 155h1v11h-1zM666 156h1v5h-1zM668 157h1v5h-1zM676 157h1v5h-1zM680 157h1v12h-1zM696 157h1v8h-1zM652 158h1v4h-1zM665 158h1v8h-1zM670 158h1v5h-1zM674 158h1v6h-1zM677 158h1v3h-1zM684 158h1v6h-1zM745 158h1v17h-1zM664 159h1v10h-1zM667 159h1v4h-1zM675 159h1v8h-1zM691 159h1v5h-1zM713 159h1v5h-1zM759 159h1v16h-1zM648 160h1v5h-1zM671 160h2v1h-2zM678 160h1v7h-1zM683 160h1v11h-1zM687 160h1v4h-1zM732 160h1v16h-1zM743 160h1v9h-1zM784 160h1v20h-1zM671 161h2v1h-2zM679 161h1v3h-1zM682 161h1v15h-1zM685 161h1v10h-1zM688 161h3v1h-3zM697 161h1v7h-1zM699 161h1v7h-1zM705 161h1v5h-1zM709 161h1v4h-1zM720 161h1v3h-1zM740 161h1v15h-1zM742 161h1v25h-1zM744 161h1v16h-1zM757 161h1v8h-1zM767 161h1v14h-1zM780 161h2v1h-2zM671 162h1v8h-1zM688 162h3v1h-3zM695 162h1v9h-1zM729 162h1v13h-1zM731 162h1v7h-1zM734 162h1v7h-1zM776 162h1v9h-1zM779 162h3v1h-3zM686 163h1v5h-1zM688 163h3v1h-3zM700 163h1v11h-1zM702 163h1v5h-1zM712 163h1v8h-1zM717 163h1v12h-1zM725 163h1v9h-1zM737 163h1v30h-1zM746 163h1v5h-1zM749 163h2v1h-2zM755 163h2v1h-2zM765 163h1v7h-1zM768 163h1v37h-1zM770 163h1v5h-1zM777 163h1v11h-1zM779 163h3v1h-3zM661 164h1v6h-1zM688 164h3v1h-3zM692 164h1v7h-1zM694 164h1v11h-1zM706 164h1v6h-1zM710 164h2v1h-2zM714 164h1v18h-1zM716 164h1v16h-1zM718 164h2v1h-2zM721 164h1v4h-1zM724 164h1v23h-1zM728 164h1v4h-1zM736 164h1v16h-1zM747 164h4v1h-4zM754 164h3v1h-3zM760 164h1v16h-1zM771 164h1v5h-1zM774 164h1v26h-1zM779 164h3v1h-3zM783 164h1v14h-1zM684 165h1v1h-1zM687 165h2v1h-2zM690 165h1v5h-1zM701 165h1v6h-1zM703 165h2v1h-2zM708 165h1v6h-1zM710 165h2v1h-2zM713 165h1v8h-1zM715 165h1v4h-1zM718 165h3v1h-3zM730 165h1v5h-1zM741 165h1v8h-1zM747 165h5v1h-5zM754 165h3v1h-3zM761 165h2v1h-2zM779 165h3v1h-3zM785 165h1v7h-1zM672 166h1v10h-1zM687 166h2v1h-2zM693 166h1v7h-1zM703 166h2v1h-2zM709 166h3v1h-3zM718 166h3v1h-3zM733 166h1v9h-1zM739 166h1v15h-1zM747 166h5v1h-5zM754 166h3v1h-3zM758 166h1v9h-1zM761 166h2v1h-2zM764 166h1v16h-1zM772 166h1v12h-1zM778 166h5v1h-5zM679 167h1v8h-1zM687 167h2v1h-2zM691 167h1v3h-1zM698 167h1v5h-1zM703 167h2v1h-2zM707 167h1v7h-1zM709 167h3v1h-3zM718 167h3v1h-3zM722 167h1v4h-1zM726 167h1v10h-1zM747 167h5v1h-5zM754 167h3v1h-3zM761 167h2v1h-2zM773 167h1v10h-1zM778 167h5v1h-5zM687 168h2v1h-2zM703 168h3v1h-3zM709 168h3v1h-3zM718 168h3v1h-3zM727 168h1v13h-1zM747 168h1v1h-1zM749 168h3v1h-3zM753 168h4v1h-4zM761 168h2v1h-2zM769 168h1v12h-1zM778 168h5v1h-5zM688 169h1v1h-1zM703 169h3v1h-3zM709 169h3v1h-3zM718 169h3v1h-3zM735 169h1v8h-1zM749 169h6v1h-6zM756 169h1v11h-1zM761 169h3v1h-3zM778 169h5v1h-5zM689 170h1v4h-1zM703 170h3v1h-3zM709 170h3v1h-3zM718 170h2v1h-2zM749 170h5v1h-5zM761 170h3v1h-3zM766 170h1v9h-1zM775 170h1v10h-1zM778 170h5v1h-5zM711 171h1v1h-1zM718 171h2v1h-2zM723 171h1v10h-1zM749 171h2v1h-2zM752 171h2v1h-2zM761 171h3v1h-3zM778 171h5v1h-5zM749 172h2v1h-2zM752 172h1v1h-1zM761 172h3v1h-3zM778 172h5v1h-5zM738 173h1v11h-1zM749 173h2v1h-2zM761 173h3v1h-3zM778 173h3v1h-3zM749 174h2v1h-2zM761 174h3v1h-3zM778 174h3v1h-3zM761 175h3v1h-3zM778 175h1v25h-1zM780 175h1v1h-1zM761 176h3v1h-3zM762 177h2v1h-2zM762 178h2v1h-2zM762 179h1v11h-1zM715 180h1v16h-1z"/>
</g>
<g shape-rendering="crispEdges"><rect x="38" y="15" width="749" height="1" fill="#afafaf"/><rect x="38" y="399" width="749" height="1" fill="#afafaf"/><rect x="38" y="15" width="1" height="385" fill="#afafaf"/><rect x="786" y="15" width="1" height="385" fill="#afafaf"/><rect x="55" y="395" width="1" height="4" fill="#afafaf"/><rect x="55" y="16" width="1" height="2" fill="#afafaf"/><rect x="77" y="395" width="1" height="4" fill="#afafaf"/><rect x="77" y="16" width="1" height="2" fill="#afafaf"/><rect x="96" y="395" width="1" height="4" fill="#afafaf"/><rect x="96" y="16" width="1" height="2" fill="#afafaf"/><rect x="112" y="395" width="1" height="4" fill="#afafaf"/><rect x="112" y="16" width="1" height="2" fill="#afafaf"/><rect x="126" y="395" width="1" height="4" fill="#afafaf"/><rect x="126" y="16" width="1" height="2" fill="#afafaf"/><rect x="222" y="395" width="1" height="4" fill="#afafaf"/><rect x="222" y="16" width="1" height="2" fill="#afafaf"/><rect x="270" y="395" width="1" height="4" fill="#afafaf"/><rect x="270" y="16" width="1" height="2" fill="#afafaf"/><rect x="305" y="395" width="1" height="4" fill="#afafaf"/><rect x="305" y="16" width="1" height="2" fill="#afafaf"/><rect x="331" y="395" width="1" height="4" fill="#afafaf"/><rect x="331" y="16" width="1" height="2" fill="#afafaf"/><rect x="353" y="395" width="1" height="4" fill="#afafaf"/><rect x="353" y="16" width="1" height="2" fill="#afafaf"/><rect x="372" y="395" width="1" height="4" fill="#afafaf"/><rect x="372" y="16" width="1" height="2" fill="#afafaf"/><rect x="388" y="395" width="1" height="4" fill="#afafaf"/><rect x="388" y="16" width="1" height="2" fill="#afafaf"/><rect x="402" y="395" width="1" height="4" fill="#afafaf"/><rect x="402" y="16" width="1" height="2" fill="#afafaf"/><rect x="498" y="395" width="1" height="4" fill="#afafaf"/><rect x="498" y="16" width="1" height="2" fill="#afafaf"/><rect x="546" y="395" width="1" height="4" fill="#afafaf"/><rect x="546" y="16" width="1" height="2" fill="#afafaf"/><rect x="581" y="395" width="1" height="4" fill="#afafaf"/><rect x="581" y="16" width="1" height="2" fill="#afafaf"/><rect x="608" y="395" width="1" height="4" fill="#afafaf"/><rect x="608" y="16" width="1" height="2" fill="#afafaf"/><rect x="629" y="395" width="1" height="4" fill="#afafaf"/><rect x="629" y="16" width="1" height="2" fill="#afafaf"/><rect x="648" y="395" width="1" height="4" fill="#afafaf"/><rect x="648" y="16" width="1" height="2" fill="#afafaf"/><rect x="664" y="395" width="1" height="4" fill="#afafaf"/><rect x="664" y="16" width="1" height="2" fill="#afafaf"/><rect x="678" y="395" width="1" height="4" fill="#afafaf"/><rect x="678" y="16" width="1" height="2" fill="#afafaf"/><rect x="774" y="395" width="1" height="4" fill="#afafaf"/><rect x="774" y="16" width="1" height="2" fill="#afafaf"/><rect x="139" y="392" width="1" height="7" fill="#afafaf"/><rect x="139" y="16" width="1" height="6" fill="#afafaf"/><rect x="415" y="392" width="1" height="7" fill="#afafaf"/><rect x="415" y="16" width="1" height="6" fill="#afafaf"/><rect x="691" y="392" width="1" height="7" fill="#afafaf"/><rect x="691" y="16" width="1" height="6" fill="#afafaf"/><rect x="39" y="17" width="6" height="1" fill="#afafaf"/><rect x="779" y="17" width="7" height="1" fill="#afafaf"/><rect x="39" y="98" width="6" height="1" fill="#afafaf"/><rect x="779" y="98" width="7" height="1" fill="#afafaf"/><rect x="39" y="179" width="6" height="1" fill="#afafaf"/><rect x="779" y="179" width="7" height="1" fill="#afafaf"/><rect x="39" y="260" width="6" height="1" fill="#afafaf"/><rect x="779" y="260" width="7" height="1" fill="#afafaf"/><rect x="39" y="341" width="6" height="1" fill="#afafaf"/><rect x="779" y="341" width="7" height="1" fill="#afafaf"/></g>
<g shape-rendering="crispEdges"><rect x="671.5" y="23.5" width="107" height="29" fill="#000" stroke="#d8d8d8"/>
<rect x="675" y="31" width="31" height="1" fill="#ffff11"/><rect x="675" y="43" width="31" height="1" fill="#139fff"/></g></svg>
<div class="yl" style="top:11px;left:1.4px">0</div><div class="yl" style="top:92px;left:1.4px">-50</div><div class="yl" style="top:173px;left:0.0px">-100</div><div class="yl" style="top:254px;left:0.0px">-150</div><div class="yl" style="top:335px;left:0.0px">-200</div><div class="xl" style="left:118.0px">0.1</div><div class="xl" style="left:397.0px">1</div><div class="xl" style="left:671.4px">10</div><div class="ttl">Octave-Band Filtering</div><div class="xlab">Frequency (kHz)</div><div class="ylab">dBm</div><div class="lg" style="top:25px">Original signal</div><div class="lg" style="top:38px">Filtered signal</div>
</div>
<div class="sb"><div class="hl"></div>
<div class="st" style="left:1.6px">Stopped</div>
<div class="bx" style="left:508px;width:85px;padding-left:2px;letter-spacing:0.2px">RBW=64.6 Hz</div>
<div class="bx" style="left:595px;width:134px;padding-left:2px">Sample rate=44.1 kHz</div>
<div class="bx" style="left:731px;width:66px;padding-left:1.5px">T=72.4463</div>
</div>
</body></html>
